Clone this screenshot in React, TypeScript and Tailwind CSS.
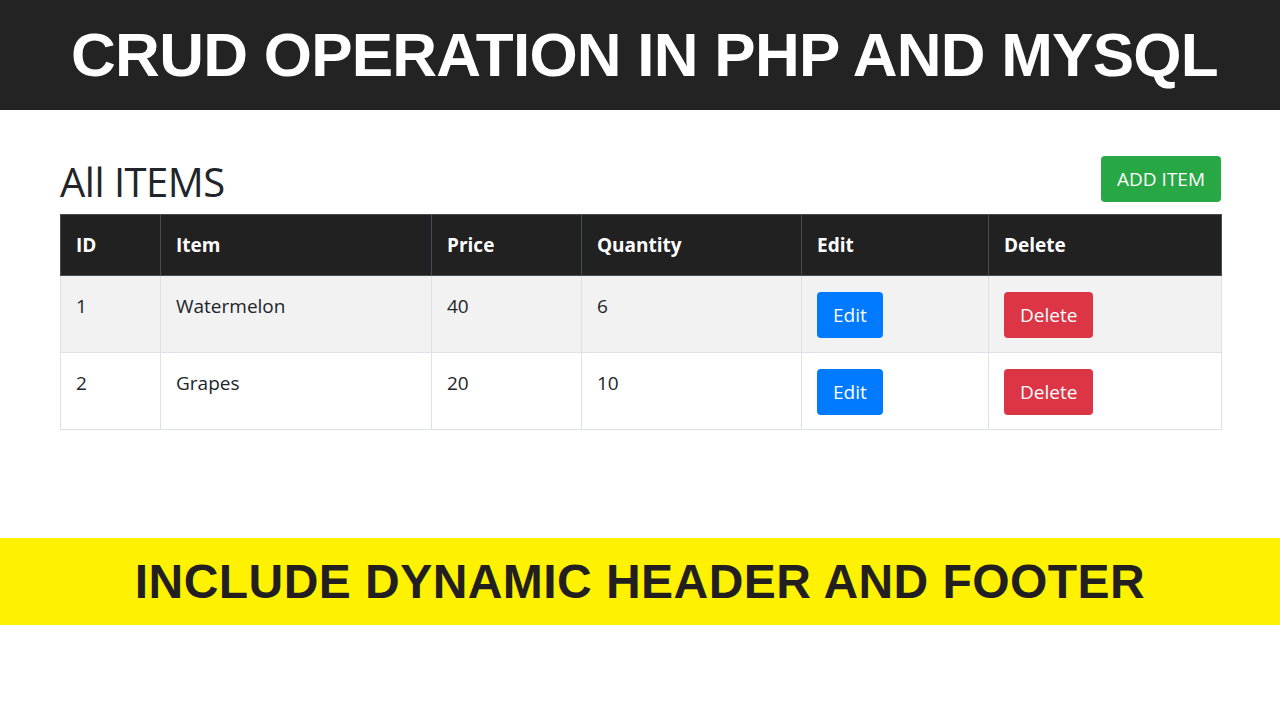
const items = [
  { id: 1, name: 'Watermelon', price: 40, qty: 6 },
  { id: 2, name: 'Grapes', price: 20, qty: 10 },
];

const cols = ['ID', 'Item', 'Price', 'Quantity', 'Edit', 'Delete'];
const widths = ['w-[100px]', 'w-[271px]', 'w-[150px]', 'w-[220px]', 'w-[187px]', 'w-[233px]'];

function Btn({ label, color }: { label: string; color: string }) {
  return (
    <span className={`inline-flex h-[46px] items-center rounded-[4px] px-[16px] text-[19px] text-white ${color}`}>
      {label}
    </span>
  );
}

export default function App() {
  return (
    <div className="h-[720px] w-[1280px] overflow-hidden bg-white font-['Open_Sans',sans-serif] text-[#212529]">
      <div className="flex h-[110px] items-center justify-center bg-[#232323] pl-[9px]">
        <h1 className="font-['Liberation_Sans',Arial,sans-serif] text-[62px] font-bold leading-none tracking-[-0.75px] text-white">
          CRUD OPERATION IN PHP AND MYSQL
        </h1>
      </div>

      <div className="pl-[60px] pr-[59px] pt-[46px]">
        <div className="flex items-end justify-between">
          <h2 className="text-[40px] font-normal leading-[40px] tracking-[-0.5px] text-[#212529]">All ITEMS</h2>
          <span className="inline-flex h-[46px] items-center rounded-[4px] bg-[#28a745] px-[16px] text-[19px] text-white">
            ADD ITEM
          </span>
        </div>

        <table className="mt-[12px] w-full table-fixed border-collapse border border-[#dee2e6] text-[19px]">
          <colgroup>
            {widths.map((w, i) => (
              <col key={i} className={w} />
            ))}
          </colgroup>
          <thead>
            <tr className="bg-[#212121] text-white">
              {cols.map((c) => (
                <th key={c} className="border border-[#454d55] px-[15px] py-[16px] text-left font-bold leading-[28px]">
                  {c}
                </th>
              ))}
            </tr>
          </thead>
          <tbody>
            {items.map((it, i) => (
              <tr key={it.id} className={i % 2 === 0 ? 'bg-[#f2f2f2]' : 'bg-white'}>
                <td className="border border-[#dee2e6] px-[15px] pb-[14px] pt-[16px] align-top leading-[28px]">{it.id}</td>
                <td className="border border-[#dee2e6] px-[15px] pb-[14px] pt-[16px] align-top leading-[28px]">{it.name}</td>
                <td className="border border-[#dee2e6] px-[15px] pb-[14px] pt-[16px] align-top leading-[28px]">{it.price}</td>
                <td className="border border-[#dee2e6] px-[15px] pb-[14px] pt-[16px] align-top leading-[28px]">{it.qty}</td>
                <td className="border border-[#dee2e6] px-[15px] pb-[14px] pt-[16px] align-top">
                  <Btn label="Edit" color="bg-[#007bff]" />
                </td>
                <td className="border border-[#dee2e6] px-[15px] pb-[14px] pt-[16px] align-top">
                  <Btn label="Delete" color="bg-[#dc3545]" />
                </td>
              </tr>
            ))}
          </tbody>
        </table>
      </div>

      <div className="mt-[108px] flex h-[87px] items-center justify-center bg-[#fef200]">
        <p className="font-['Liberation_Sans',Arial,sans-serif] text-[48px] font-bold leading-none tracking-[0.45px] text-[#231f20]">
          INCLUDE DYNAMIC HEADER AND FOOTER
        </p>
      </div>
    </div>
  );
}
